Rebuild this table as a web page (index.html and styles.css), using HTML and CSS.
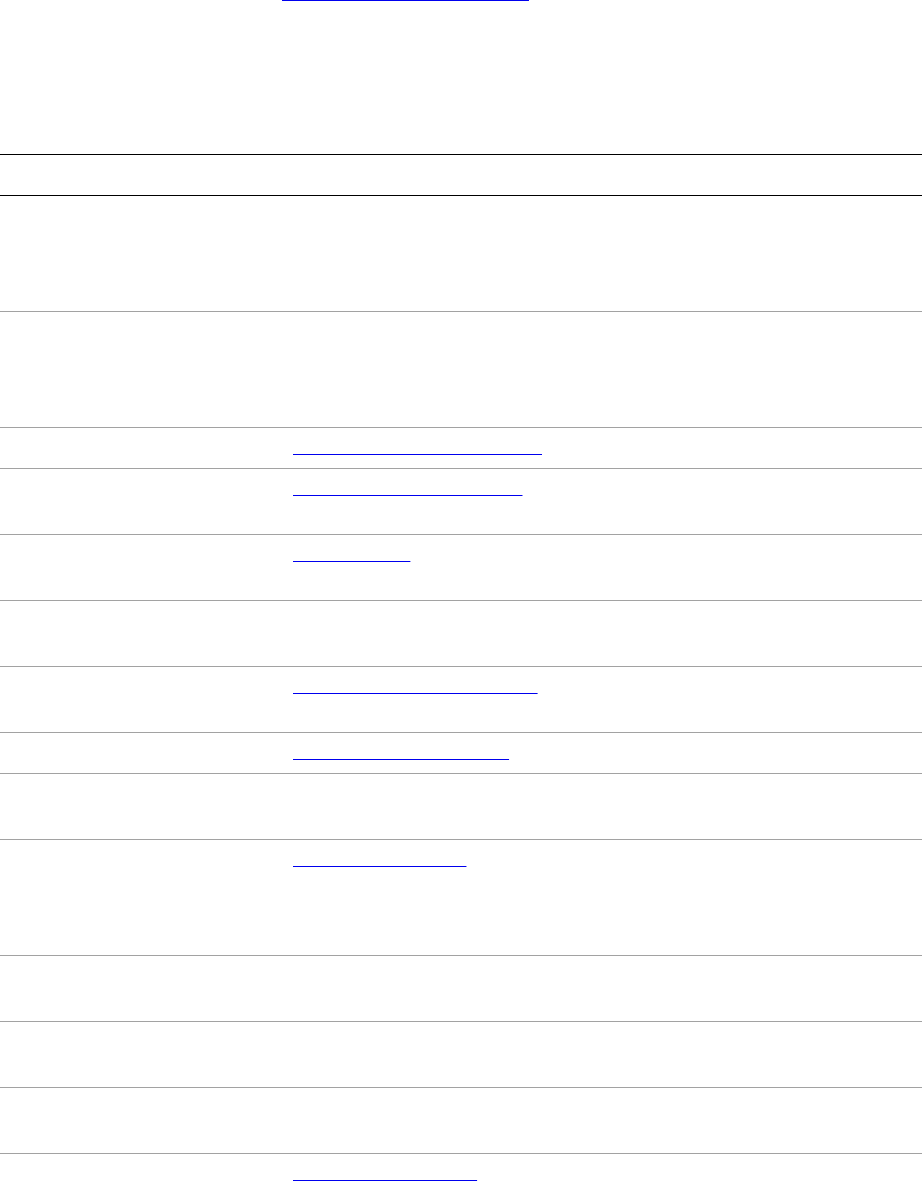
FILE: index.html
```html
<!DOCTYPE html>
<html lang="en">
<head>
<meta charset="utf-8">
<title>Project resources</title>
<link rel="stylesheet" href="styles.css">
</head>
<body>
<div class="page">
  <div class="meta">
    <span class="meta-label">Website</span>
    <span class="meta-value"><a href="#">Official homepage and repositories</a></span>
  </div>
  <p class="intro">The table below lists the main resources maintained by the project team,<br>together with a short note about what each one is used for.</p>
  <h2 class="section-title">Resources</h2>
  <table class="resources">
    <colgroup><col class="col-name"><col class="col-info"></colgroup>
    <thead>
      <tr><th>Resource</th><th>Details</th></tr>
    </thead>
    <tbody>
      <tr><td>Overview</td><td>General information about the project, its goals and history.<br>Maintained by the steering committee and reviewed each year.<br>Available in several languages thanks to volunteers.<br>Last updated with the latest stable release.</td></tr>
      <tr><td>Governance</td><td>Describes how decisions are made within the project.<br>Covers voting rules, elections and the code of conduct.<br>Changes are proposed through the public discussion list.<br>Archived versions are kept for reference.</td></tr>
      <tr><td>Documentation</td><td><a href="#">Community documentation website</a></td></tr>
      <tr><td>Manuals</td><td><a href="#">Extended project documentation</a><br>Reference guides for users and administrators.</td></tr>
      <tr><td>Planning</td><td><a href="#">Project roadmap</a><br>Upcoming features and scheduled milestones.</td></tr>
      <tr><td>Licensing</td><td>Source code is released under a free software license.<br>Documentation uses a Creative Commons license.</td></tr>
      <tr><td>Contributing</td><td><a href="#">Contributor guidelines and policies</a><br>How to submit patches, translations and artwork.</td></tr>
      <tr><td>Mailing lists</td><td><a href="#">Community mailing list archive</a></td></tr>
      <tr><td>Chat</td><td>Real-time discussion channels for users and developers.<br>Logs are published daily.</td></tr>
      <tr><td>User guide</td><td><a href="#">Printable user handbook</a><br>Step-by-step instructions for everyday tasks.<br>Includes screenshots and troubleshooting tips.<br>Also available as a single PDF file.</td></tr>
      <tr><td>Events</td><td>Yearly conference and regional meetups.<br>Talks are recorded and published online.</td></tr>
      <tr><td>Support</td><td>Community support through forums and chat.<br>Commercial support is offered by partner companies.</td></tr>
      <tr><td>Security</td><td>Vulnerabilities should be reported privately.<br>Fixes are announced on the security list.</td></tr>
      <tr><td>Developers</td><td><a href="#">Full API reference manual</a><br>Generated automatically from the source tree.</td></tr>
    </tbody>
  </table>
</div>
</body>
</html>
```
FILE: styles.css
```css
html, body {
  margin: 0;
  padding: 0;
  background: #ffffff;
}

body {
  font-family: "Liberation Sans", Arial, sans-serif;
  font-size: 16px;
  line-height: 25px;
  color: transparent;
}

a {
  color: transparent;
  text-decoration: underline;
  text-decoration-color: #0000ee;
  text-decoration-thickness: 1px;
  text-decoration-skip-ink: none;
}

.page {
  margin-top: -19px;
}

.meta {
  display: grid;
  grid-template-columns: 282px 1fr;
}

.intro {
  margin: 23px 0 0;
}

.section-title {
  margin: 25px 0 25px;
  font-size: 16px;
  line-height: 25px;
  font-weight: bold;
}

.resources {
  width: 100%;
  border-collapse: collapse;
  table-layout: fixed;
}

.col-name {
  width: 285px;
}

.resources th,
.resources td {
  padding: 7px 8px 8px;
  text-align: left;
  vertical-align: top;
}

.resources thead th {
  border-top: 1px solid #000000;
  border-bottom: 1px solid #000000;
  font-weight: bold;
}

.resources tbody td {
  border-bottom: 1px solid #a2a2a2;
}
```
